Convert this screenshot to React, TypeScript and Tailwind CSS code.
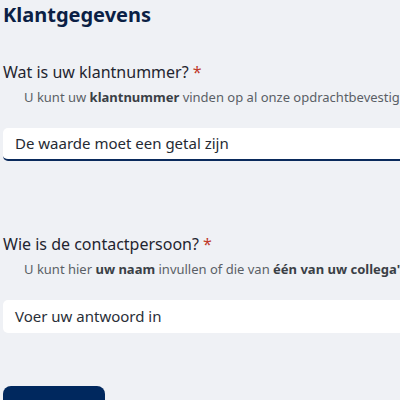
const FONT = "font-['Segoe_UI','Noto_Sans','Open_Sans',sans-serif]";

const Required = () => <span className="ml-1 text-[#c0392b]">*</span>;

const Field = ({
  label,
  help,
  value,
  placeholder,
  invalid,
}: {
  label: string;
  help: React.ReactNode;
  value?: string;
  placeholder?: string;
  invalid?: boolean;
}) => (
  <div>
    <label className="block text-[16px] leading-6 text-[#1f2530]">
      {label}
      <Required />
    </label>
    <p className="mt-[3px] whitespace-nowrap pl-[21px] text-[13px] leading-5 text-[#5a5f66]">{help}</p>
    <div
      className={
        'mt-[21px] flex h-[33px] w-[420px] items-center rounded-[5px] bg-white px-[12px] text-[15px] text-[#252a33] ' +
        (invalid ? 'border-b-2 border-[#0a2a5c]' : '')
      }
    >
      {value ?? <span className="text-[#2a2f38]">{placeholder}</span>}
    </div>
  </div>
);

export default function App() {
  return (
    <div className={`h-[400px] w-[400px] overflow-hidden bg-[#eff1f5] px-[3px] ${FONT}`}>
      <h2 className="pt-[1px] text-[20px] font-bold leading-7 text-[#0b1f45]">Klantgegevens</h2>

      <div className="mt-[31px]">
        <Field
          label="Wat is uw klantnummer?"
          help={
            <>
              U kunt uw <b className="font-bold text-[#3a3f46]">klantnummer</b> vinden op al onze opdrachtbevestigingen
            </>
          }
          value="De waarde moet een getal zijn"
          invalid
        />
      </div>

      <div className="mt-[71px]">
        <Field
          label="Wie is de contactpersoon?"
          help={
            <>
              U kunt hier <b className="font-bold text-[#3a3f46]">uw naam</b> invullen of die van{' '}
              <b className="font-bold text-[#3a3f46]">één van uw collega's</b>
            </>
          }
          placeholder="Voer uw antwoord in"
        />
      </div>

      <button className="mt-[53px] h-[52px] w-[102px] rounded-[8px] bg-[#00285e] text-white">Volgende</button>
    </div>
  );
}
